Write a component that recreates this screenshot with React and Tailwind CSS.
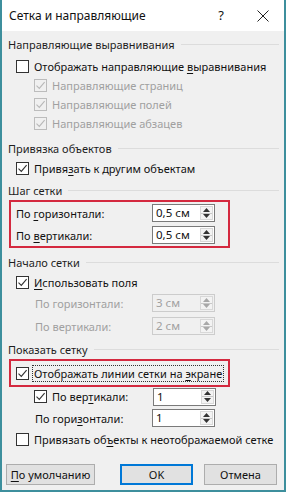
import React from "react";

const FONT = { fontFamily: '"Noto Sans", "Open Sans", Arial, sans-serif' };

function Check({ checked, disabled }) {
  const stroke = disabled ? "#b8b8b8" : "#333333";
  return (
    <span
      className={`flex h-[13px] w-[13px] shrink-0 items-center justify-center border ${
        disabled ? "border-[#bcbcbc] bg-[#f0f0f0]" : "border-[#333333] bg-white"
      }`}
    >
      {checked && (
        <svg width="11" height="11" viewBox="0 0 11 11">
          <path d="M1.5 5.6 L4.3 8.4 L9.6 2.2" fill="none" stroke={stroke} strokeWidth="1.1" />
        </svg>
      )}
    </span>
  );
}

function Header({ children, className = "" }) {
  return (
    <div className={`flex h-[20px] items-center pl-[6px] pr-[5px] ${className}`}>
      <span className="text-[#1e1e1e]">{children}</span>
      <div className="ml-[6px] h-px flex-1 bg-[#dcdcdc]" />
    </div>
  );
}

function CheckRow({ checked, disabled, indent = false, className = "h-[19px]", children }) {
  return (
    <div className={`flex items-center ${indent ? "pl-[32px]" : "pl-[14px]"} ${className}`}>
      <Check checked={checked} disabled={disabled} />
      <span className={`ml-[5px] ${disabled ? "text-[#a0a0a0]" : "text-[#111]"}`}>{children}</span>
    </div>
  );
}

function Spin({ value, disabled }) {
  return (
    <div
      className={`flex h-[18px] w-[63px] items-stretch border ${
        disabled ? "border-[#cccccc] bg-[#f0f0f0]" : "border-[#7a7a7a] bg-white"
      }`}
    >
      <span className={`flex flex-1 items-center pl-[3px] text-[11.5px] ${disabled ? "text-[#a0a0a0]" : "text-[#111]"}`}>
        {value}
      </span>
      <span className="my-px mr-px flex w-[13px] flex-col border border-[#d8d8d8] bg-[#f3f3f3]">
        <span className="flex flex-1 items-center justify-center">
          <svg width="7" height="4" viewBox="0 0 7 4">
            <path d="M0 4 L3.5 0 L7 4 Z" fill={disabled ? "#a8a8a8" : "#333"} />
          </svg>
        </span>
        <span className="h-px bg-[#c8c8c8]" />
        <span className="flex flex-1 items-center justify-center">
          <svg width="7" height="4" viewBox="0 0 7 4">
            <path d="M0 0 L7 0 L3.5 4 Z" fill={disabled ? "#a8a8a8" : "#333"} />
          </svg>
        </span>
      </span>
    </div>
  );
}

function SpinRow({ label, value, disabled, labelW, pl, className = "h-[22px]" }) {
  return (
    <div className={`flex items-center ${pl} ${className}`}>
      <span className={`${labelW} ${disabled ? "text-[#a0a0a0]" : "text-[#111]"}`}>{label}</span>
      <Spin value={value} disabled={disabled} />
    </div>
  );
}

const U = ({ children }) => <span className="underline underline-offset-[2px]">{children}</span>;

export default function App() {
  return (
    <div
      style={FONT}
      className="flex h-[492px] w-[286px] flex-col overflow-hidden whitespace-nowrap border-x-2 border-b-2 border-[#3d8f9d] bg-[#f0f0f0] text-[11px] leading-none"
    >
      {/* title bar */}
      <div className="flex h-[31px] shrink-0 items-center bg-white pl-[7px] text-[12px] text-[#111]">
        <span className="flex-1">Сетка и направляющие</span>
        <span className="w-[20px] text-center text-[13px]">?</span>
        <span className="ml-[25px] mr-[14px] flex w-[14px] justify-center">
          <svg width="12" height="12" viewBox="0 0 12 12">
            <path d="M0.5 0.5 L11.5 11.5 M11.5 0.5 L0.5 11.5" stroke="#222" strokeWidth="1" />
          </svg>
        </span>
      </div>

      <Header className="mt-[3px]">Направляющие выравнивания</Header>
      <CheckRow className="mt-[3px] h-[19px]">
        Отображать направляющие <U>в</U>ыравнивания
      </CheckRow>
      <CheckRow checked disabled indent>Направляющие страниц</CheckRow>
      <CheckRow checked disabled indent>Направляющие полей</CheckRow>
      <CheckRow checked disabled indent>Направляющие абзацев</CheckRow>

      <Header className="mt-[5px]">Привязка объектов</Header>
      <CheckRow checked className="h-[20px]">
        Привя<U>з</U>ать к другим объектам
      </CheckRow>

      <Header className="mt-[2px]">Шаг сетки</Header>
      <div className="ml-[7px] w-[221px] border-2 border-[#d4293f]">
        <SpinRow label={<>По <U>г</U>оризонтали:</>} value="0,5 см" labelW="w-[136px]" pl="pl-[5px]" />
        <SpinRow label={<>По <U>в</U>ертикали:</>} value="0,5 см" labelW="w-[136px]" pl="pl-[5px]" />
      </div>

      <Header className="mt-[4px]">Начало сетки</Header>
      <CheckRow checked className="h-[20px]">
        <U>И</U>спользовать поля
      </CheckRow>
      <SpinRow label="По горизонтали:" value="3 см" disabled labelW="w-[117px]" pl="pl-[33px]" className="mt-px h-[20px]" />
      <SpinRow label="По вертикали:" value="2 см" disabled labelW="w-[117px]" pl="pl-[33px]" className="mt-[3px] h-[20px]" />

      <Header className="mt-[3px] h-[16px]">Показать сетку</Header>
      <div className="ml-[7px] flex h-[28px] w-[221px] items-center border-2 border-[#d4293f] pl-[5px]">
        <Check checked />
        <span className="ml-[3px] border border-dotted border-[#333] px-[1px] py-[2px] text-[#111]">
          Отображать линии сетки на <U>э</U>кране
        </span>
      </div>
      <div className="flex h-[19px] items-center pl-[32px]">
        <Check checked />
        <span className="ml-[5px] w-[101px] text-[#111]">
          По вер<U>т</U>икали:
        </span>
        <Spin value="1" />
      </div>
      <SpinRow label={<>По гори<U>з</U>онтали:</>} value="1" labelW="w-[117px]" pl="pl-[33px]" className="mt-px h-[22px]" />
      <CheckRow className="h-[20px]">
        Привязать об<U>ъ</U>екты к неотображаемой сетке
      </CheckRow>

      <div className="mt-[15px] flex h-[21px] pl-[4px]">
        <button className="flex w-[89px] items-center justify-center border border-[#adadad] bg-[#e1e1e1] text-[#111]">
          <U>П</U>о умолчанию
        </button>
        <button className="ml-[25px] flex w-[73px] items-center justify-center border-2 border-[#0078d7] bg-[#e1e1e1] text-[#111]">
          OK
        </button>
        <button className="ml-[11px] flex w-[73px] items-center justify-center border border-[#adadad] bg-[#e1e1e1] text-[#111]">
          Отмена
        </button>
      </div>
    </div>
  );
}
